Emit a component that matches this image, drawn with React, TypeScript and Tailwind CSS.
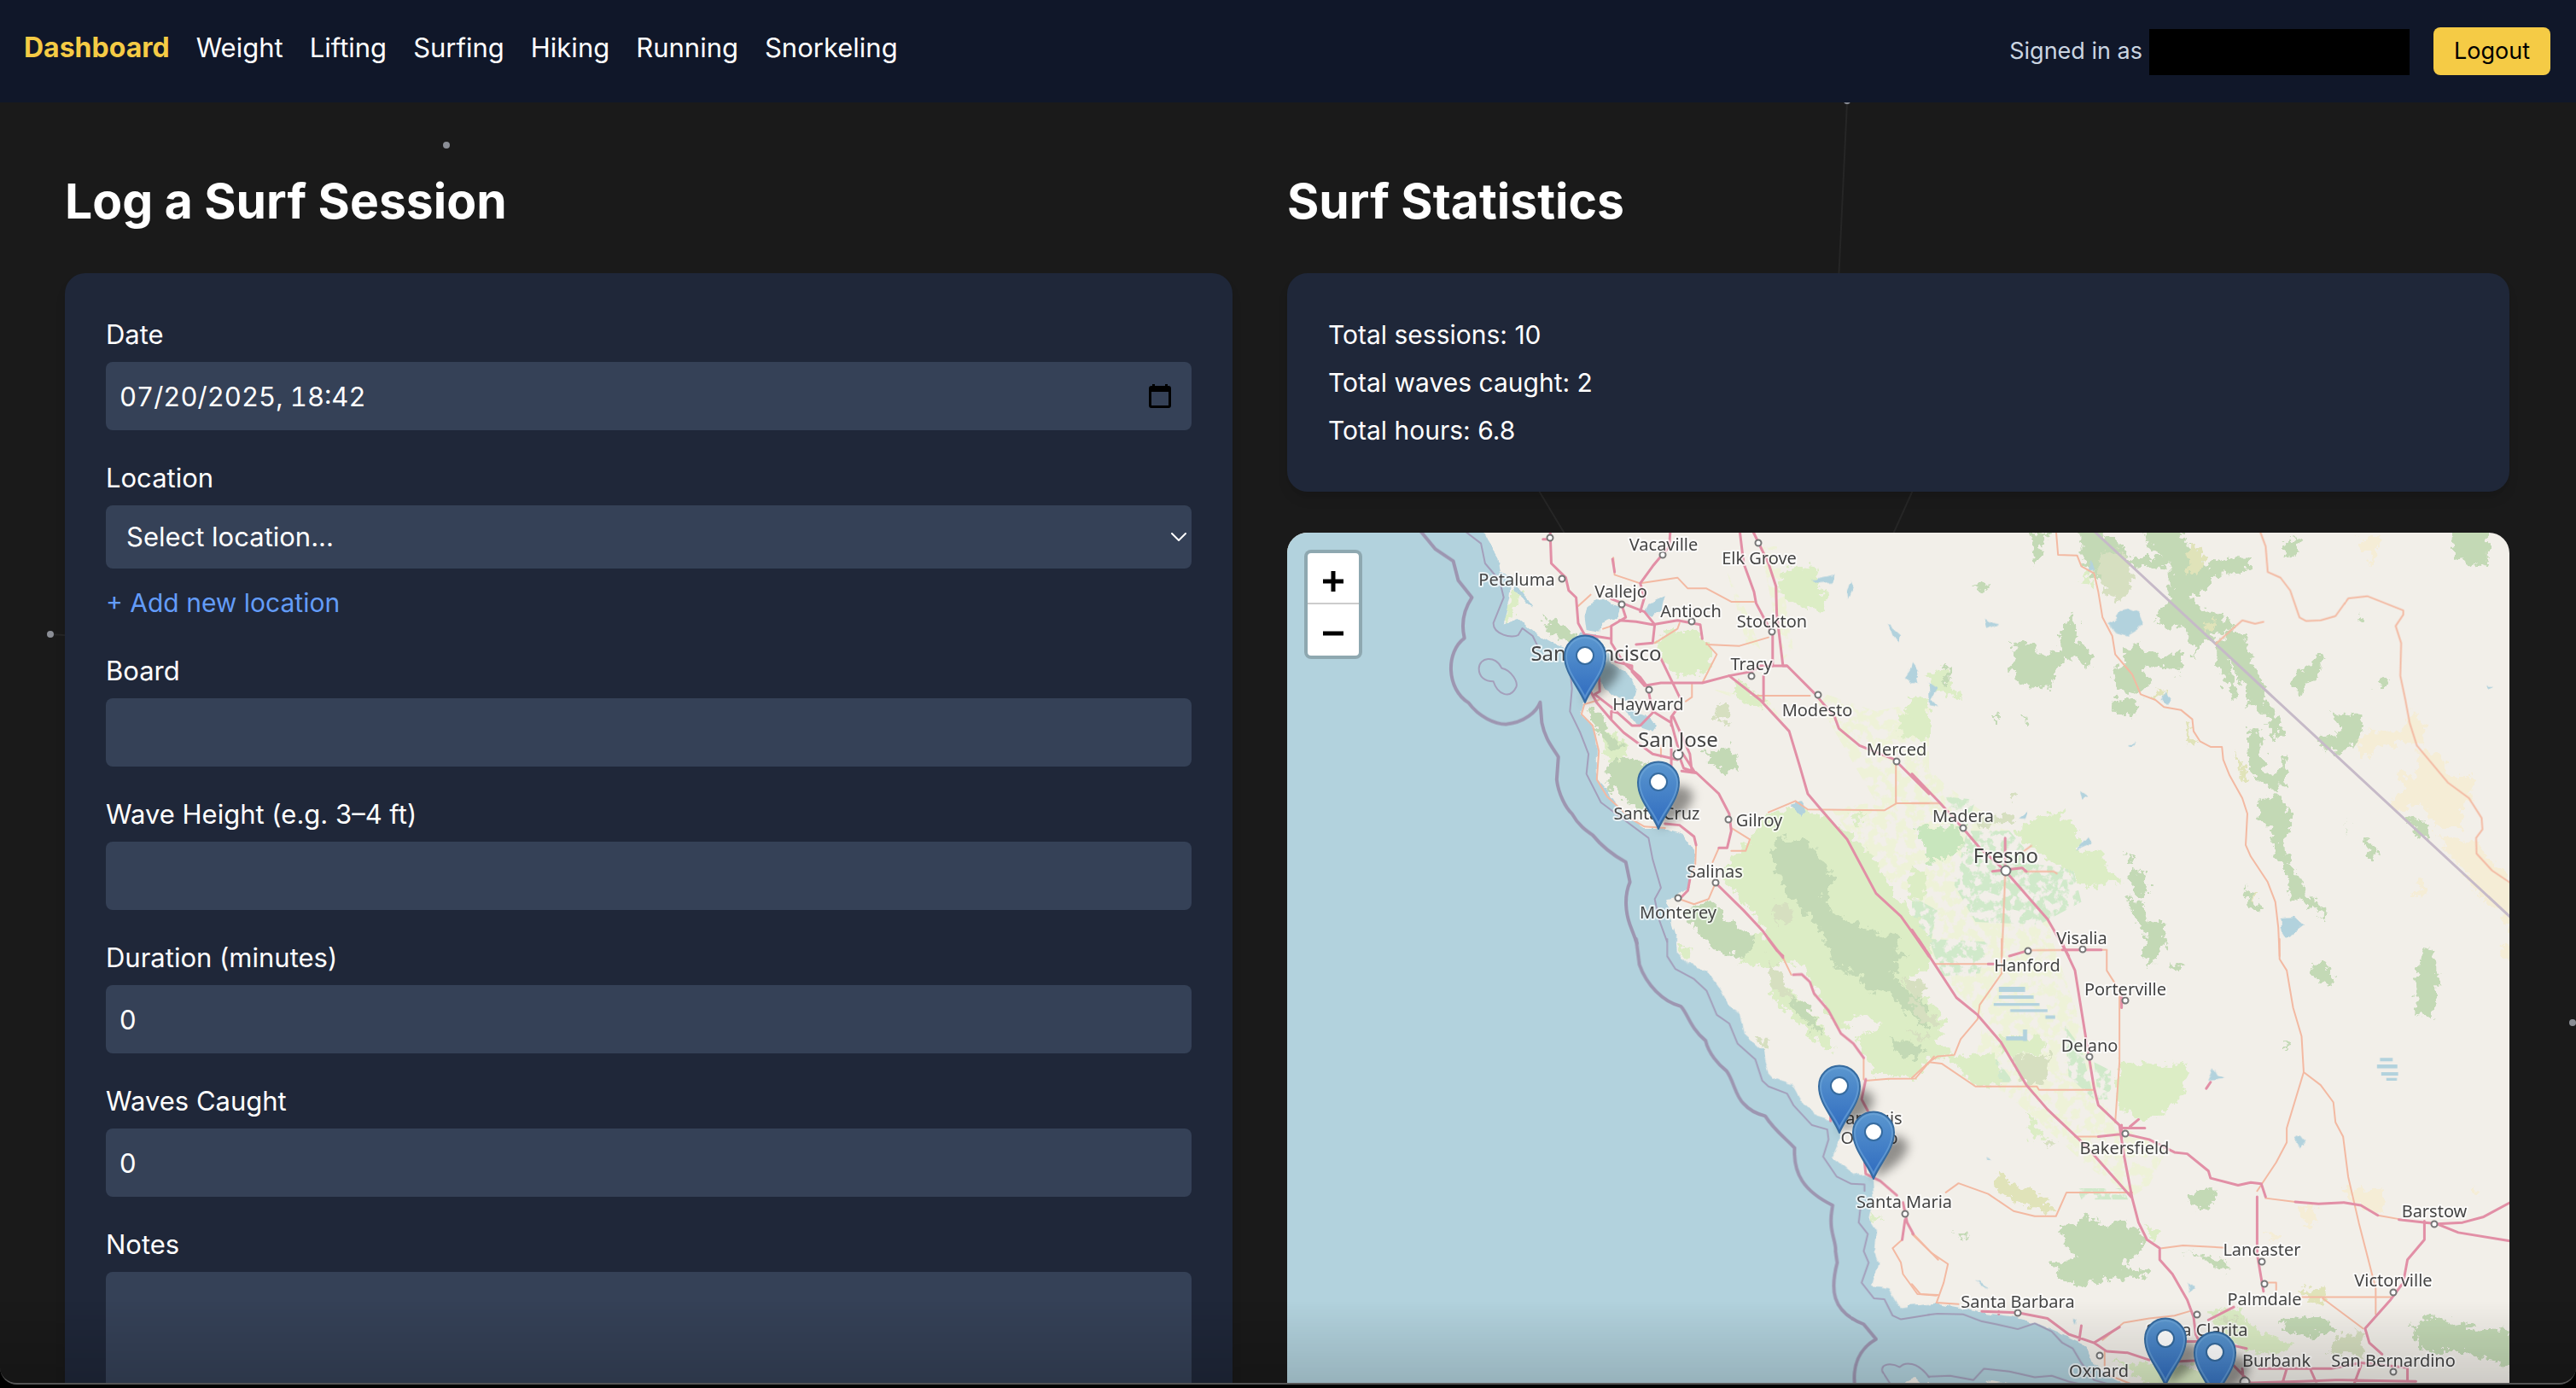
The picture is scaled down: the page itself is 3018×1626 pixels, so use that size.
import React, { useState } from "react";

const NAV = ["Weight", "Lifting", "Surfing", "Hiking", "Running", "Snorkeling"];

/* ---------- Map data ---------- */

type Sheet = "nw" | "ne" | "sw" | "se";
type Shape = [Sheet, string];

// Each sheet has its own drawing units; the matrix places it on the map.
const SHEETS: Record<Sheet, string> = {
  nw: "matrix(0.4847 0 0 0.3333 1500 620)",
  ne: "matrix(0.4962 0 0 0.3333 2240 620)",
  sw: "matrix(0.4847 0 0 0.3355 1500 1100)",
  se: "matrix(0.4962 0 0 0.3355 2240 1100)",
};

const WATER: Shape[] = [
  ["nw", "M-20,-20 480,-20 500,40 525,100 530,150 560,165 556,240 540,335 575,318 610,360 660,400 700,420 735,470 737,600 725,650 755,690 765,760 765,880 800,940 830,1000 880,1050 930,1050 970,1070 1000,1130 1003,1170 985,1260 960,1290 935,1300 945,1370 955,1420 960,1510 -20,1510Z"],
  ["nw", "M740,270 780,245 820,270 812,310 775,330 772,362 740,355 735,300Z"],
  ["nw", "M725,365 760,370 790,430 800,470 840,510 862,560 855,600 820,600 780,560 765,480 700,430Z"],
  ["nw", "M830,625 880,655 910,690 900,710 860,690 845,660Z"],
  ["nw", "M890,260 930,235 922,280 900,305 880,290Z"],
  ["nw", "M1285,175 1340,160 1335,185 1295,190Z M1470,330 1500,370 1495,400 1480,370Z M1510,520 1530,480 1540,540 1525,545Z M1370,210 1380,180 1385,200 1372,245Z"],
  ["nw", "M560,180 575,200 610,275 600,268 570,220Z M1235,965 1260,955 1270,990 1255,1010Z"],
  ["ne", "M460,330 478,318 490,290 512,281 535,295 543,325 532,352 508,374 480,362 470,345Z"],
  ["ne", "M870,1365 905,1362 925,1390 905,1412 885,1440 870,1405Z M600,570 612,600 600,615 592,600Z"],
  ["ne", "M0,470 15,500 5,545 -6,510Z M40,540 60,560 45,600 60,625 42,618Z M172,315 200,335 178,350Z M415,150 425,110 432,140Z M395,920 412,938 400,950Z M512,760 530,745 520,765Z M250,1020 275,990 268,1020Z M385,1130 415,1080 425,1105Z M1358,550 1372,552 1364,560Z"],
  ["sw", "M-20,-20 958,-20 955,40 985,85 1030,110 1060,170 1085,240 1110,260 1120,330 1165,390 1180,470 1190,485 1235,505 1260,570 1300,620 1345,640 1355,690 1335,760 1385,820 1400,815 1432,840 1435,900 1422,980 1440,1020 1435,1090 1445,1130 1430,1210 1470,1220 1498,1290 1568,1275 1568,1900 -20,1900Z"],
  ["se", "M-10,1282 60,1275 150,1300 240,1320 300,1345 340,1370 380,1400 410,1420 425,1475 470,1530 520,1568 520,1900 -10,1900Z"],
  ["se", "M700,495 712,448 722,475 742,485 720,492Z M905,700 920,685 930,705 915,730Z M650,1200 665,1220 655,1240Z M378,1320 388,1325 384,1345Z M150,1190 185,1220 160,1210Z M178,760 188,775 180,772Z"],
];

const WATER_CRISP: Shape[] = [
  ["se", "M205,167h62v18h-62z M205,197h82v12h-82z M193,224h108v9h-108z M232,245h88v10h-88z M315,267h23v12h-23z M222,340h50v14h-50z M262,316h10v40h-10z M1105,415h30v12h-30z M1098,438h48v14h-48z M1108,465h40v12h-40z M1120,485h25v10h-25z"],
];

const FARMLAND: Shape[] = [
  ["nw", "M1040,560 1180,600 1230,700 1180,640Z M1280,560 1440,640 1568,600 1568,1300 1480,1250 1380,1080 1330,980 1440,960Z M1080,150 1130,300 1160,420 1130,420Z M1160,60 1200,60 1240,420 1215,460Z"],
  ["ne", "M0,780 80,900 230,1060 200,1200 330,1380 330,1510 0,1510Z"],
  ["se", "M20,0 330,0 400,300 440,500 480,640 600,740 560,860 520,900 420,800 360,720 270,600 200,520 150,420 170,280 90,160Z"],
];

const MEADOW: Shape[] = [
  ["nw", "M1180,1000 1250,980 1320,1010 1420,1130 1490,1290 1568,1430 1568,1510 1210,1510 1150,1370 1100,1270 1060,1230 1100,1150 1140,1080Z"],
  ["nw", "M1210,160 1240,130 1300,140 1320,280 1260,280 1200,220Z M930,360 1010,360 1045,420 1035,500 960,520 930,460 905,400Z M555,210 580,230 555,335 540,335Z M780,690 840,760 820,830 780,800Z M1495,650 1568,660 1568,740 1500,735Z M1100,520 1180,610 1160,630 1100,590Z M1375,1000 1410,1000 1405,1030 1378,1030Z"],
  ["ne", "M250,1060 290,1010 350,1000 395,1060 395,1130 455,1130 460,1200 500,1240 400,1255 370,1200 320,1160 260,1090Z M-10,580 40,600 40,660 -10,665Z M25,520 70,490 115,600 80,590Z M395,190 405,150 430,160 425,205Z"],
  ["ne", "M0,1180 40,1230 20,1300 -10,1290Z M-10,1400 20,1440 50,1510 -10,1510Z"],
  ["sw", "M1010,-10 1568,-10 1568,110 1520,120 1530,190 1568,220 1568,420 1530,480 1440,480 1415,400 1390,350 1450,300 1400,260 1370,290 1350,320 1300,200 1270,110 1230,70 1190,100 1120,90 1100,40Z"],
  ["sw", "M1190,130 1230,180 1290,260 1340,390 1310,380 1250,290 1180,190Z M960,10 990,40 985,70 960,50Z M1420,960 1460,975 1430,990Z"],
  ["se", "M-10,180 40,210 80,290 60,350 100,400 40,420 10,490 -10,460Z M490,430 560,440 650,435 640,540 600,600 550,640 500,600 480,540Z M210,340 310,345 315,400 205,400Z M80,410 200,400 210,510 150,515Z M270,600 320,690 280,700Z M550,1000 590,1020 570,1060Z M470,1470 560,1480 700,1500 720,1590 560,1560Z M700,1300 770,1290 800,1350 900,1420 860,1460 760,1420Z"],
];

const MINT: Shape[] = [
  ["ne", "M130,1060 230,1060 300,1180 380,1190 400,1310 300,1390 150,1380 100,1250Z M0,1290 60,1340 40,1480 0,1420Z M80,940 150,950 140,1000 90,980Z"],
  ["se", "M40,0 180,10 160,120 70,130Z M360,300 400,380 430,560 370,480Z M430,430 470,460 470,560 440,560Z M150,410 200,420 240,500 170,500Z M390,870 500,870 510,910 400,910Z"],
];

const ORCHARD: Shape[] = [["ne", "M10,1045 120,1050 120,1130 40,1175 25,1100Z"]];

const FOREST: Shape[] = [
  ["nw", "M795,820 850,800 900,830 900,1000 870,1000 820,940 790,900Z M640,310 690,340 720,380 700,400 650,370Z M1200,1080 1280,1100 1340,1230 1310,1290 1340,1350 1450,1420 1520,1510 1380,1510 1300,1400 1230,1290 1180,1150Z M975,1340 1040,1310 1100,1390 1150,1440 1120,1510 1050,1480 1000,1400Z"],
  ["nw", "M740,620 770,640 800,730 830,760 800,770 765,700Z M1020,790 1090,760 1110,850 1070,850Z"],
  ["ne", "M400,-10 420,-10 500,60 510,110 560,95 590,95 560,60 545,-10 620,-10 655,60 690,90 690,130 740,105 800,100 800,140 720,165 690,215 655,240 690,280 750,320 755,350 700,380 680,400 670,465 665,400 640,340 600,350 575,310 610,250 610,130 560,140 520,120 450,190 400,110Z"],
  ["ne", "M720,400 760,345 785,370 795,440 830,550 830,600 870,660 875,720 845,735 845,660 800,620 785,545 760,490 745,450 770,590 760,600 720,470Z"],
  ["ne", "M800,700 825,700 830,850 850,870 870,840 880,785 885,800 875,900 855,920 820,880 790,830 795,740Z"],
  ["ne", "M815,960 865,930 895,990 895,1050 875,1100 905,1200 940,1290 980,1345 975,1365 930,1310 895,1300 885,1220 860,1140 845,1050 825,1020Z"],
  ["ne", "M235,400 290,395 300,440 350,430 350,370 375,290 390,330 385,390 420,420 420,490 380,450 350,470 325,560 260,555 250,520 220,500 245,460Z"],
  ["ne", "M500,420 525,400 570,440 600,440 640,425 635,510 600,490 560,480 545,510 565,540 540,580 490,570 470,500 500,470Z M480,590 540,600 520,660 475,650Z"],
  ["ne", "M985,650 1060,650 1065,690 1055,740 1020,775 990,790 960,750 960,725 1010,730 1010,690Z M880,100 875,60 900,25 918,60 905,95Z M1280,-10 1362,-10 1362,120 1325,130 1285,100 1275,60Z M900,520 930,490 955,470 955,440 977,465 950,510 920,580 900,555Z M1095,550 1115,520 1125,540 1105,563Z M1170,1020 1190,1005 1215,1040 1228,1095 1195,1080Z"],
  ["ne", "M515,1190 550,1200 560,1270 545,1290 520,1270Z M510,1300 545,1310 560,1380 595,1372 595,1440 585,1510 545,1500 560,1430 530,1380Z M785,1260 800,1275 825,1340 800,1345Z M280,10 330,10 310,60 290,130Z M140,205 185,190 170,220Z M75,475 88,475 88,540 78,540Z M190,655 208,665 200,690Z M260,650 280,665 270,680Z M1050,310 1060,300 1068,320 1058,330Z M1070,1080 1080,1090 1098,1140 1088,1170 1075,1140Z M1022,1080 1030,1010 1026,1060Z M500,1140 530,1150 515,1165Z"],
  ["sw", "M1310,-10 1500,-10 1480,60 1490,140 1530,200 1568,230 1568,330 1500,230 1460,170 1420,190 1400,120 1350,110Z M1470,340 1550,380 1540,420 1490,400Z M1225,190 1280,240 1310,330 1280,310 1240,240Z M1030,0 1110,0 1120,40 1060,20Z"],
  ["se", "M345,1010 420,965 450,1000 500,990 550,1040 545,1090 490,1140 570,1160 540,1180 460,1190 400,1210 350,1190 340,1150 320,1130 390,1120Z M870,1330 960,1310 1000,1370 940,1390 880,1370Z M1180,1350 1220,1320 1340,1360 1420,1370 1420,1500 1300,1440 1200,1440Z M650,890 710,870 720,910 680,945 655,920Z M940,90 970,85 1000,130 990,165 950,140Z M1190,120 1215,30 1240,80 1240,200 1225,280 1190,260Z M550,-10 600,-10 590,50 560,100 550,50Z M615,90 645,90 630,115Z M872,355 888,370 880,400Z M100,1030 130,1030 120,1055Z M640,1090 740,1120 745,1160 690,1120Z"],
];

const SCRUB: Shape[] = [
  ["nw", "M1050,640 1070,615 1090,640 1080,680 1055,670Z M1190,1310 1230,1320 1240,1370 1200,1390Z"],
  ["ne", "M445,80 500,80 522,160 500,240 480,250 440,190Z M150,1020 230,1000 240,1030 160,1050Z M230,930 245,940 240,970Z"],
  ["sw", "M1180,60 1215,150 1235,210 1190,170Z M1500,140 1560,160 1540,220Z M1510,300 1568,350 1540,350Z M1150,345 1185,350 1175,390Z"],
  ["se", "M235,400 325,410 310,505 270,505 240,450Z M-10,200 30,240 70,300 20,290Z M1000,1390 1070,1370 1060,1460 980,1450Z M720,1320 780,1330 760,1370Z M310,700 340,710 325,735Z"],
];

const HEATH: Shape[] = [
  ["ne", "M650,110 670,55 695,95 685,140 655,170Z M690,340 710,328 720,345 695,358Z M565,580 590,555 600,575 575,590Z M645,680 655,680 665,765 650,750Z M765,765 780,830 790,875 780,880 770,820Z M800,1280 818,1280 808,1300Z"],
  ["se", "M200,810 240,860 300,890 345,955 270,935 220,890 195,870Z M920,1220 975,1220 970,1290 940,1260Z"],
];

const SAND: Shape[] = [
  ["ne", "M1050,740 1085,705 1150,710 1190,640 1210,700 1210,750 1150,750 1100,770 1060,800Z M1145,860 1190,870 1190,775 1240,780 1270,870 1325,870 1325,940 1300,960 1300,1050 1240,1050 1200,960 1150,1000 1130,960 1160,920Z M1240,1080 1325,1095 1420,1240 1420,1440 1380,1330 1340,1290 1290,1180Z M1055,30 1105,30 1090,125Z M1185,1220 1215,1240 1210,1290 1180,1280 1200,1260Z"],
  ["se", "M1010,870 1110,870 1120,960 1080,960 1050,920Z M920,935 955,940 950,1000 925,1005Z M835,1020 865,1030 850,1060Z M1325,865 1345,880 1330,900Z M1390,20 1420,20 1420,80 1395,60Z"],
];

const ISLANDS: Shape[] = [
  ["sw", "M1505,1555 1535,1535 1550,1555 1568,1550 1568,1600 1500,1600Z"],
  ["se", "M175,1550 190,1538 230,1548 290,1568 290,1600 165,1600Z"],
];

const TRUNK: Shape[] = [
  ["nw", "M770,600 735,615 728,650 755,690 770,780 765,880 790,940 850,1020 880,1045 930,1050 M805,100 808,160 870,190 960,170 985,208 1030,208 1090,255 1145,255 M1180,995 1245,955 1275,985 1460,988 1490,963 1568,963 M1488,815V963 M1030,405 1110,410 1180,380 M1020,540 1055,440 1030,400 M1150,585H1280 M1090,1050 1135,1090 1125,1130 1090,1130 M1005,1110 1003,1180 990,1230 M965,1300 1000,1318 1035,1300 1050,1250 M995,545V590L980,605 M720,270 750,230 M920,760V800 M945,770V830 M905,400 960,350 965,330 M1060,1120 1045,1170 M780,350 800,340"],
  ["ne", "M340,0 345,90 390,92 400,130 430,155 440,220 450,310 473,375 480,440 520,510 540,580 575,600 595,625 635,635 662,668 665,710 680,745 705,765 732,765 735,810 750,865 780,945 792,1000 788,1110 800,1150 840,1240 858,1310 865,1400 868,1500"],
  ["ne", "M820,0 835,60 840,150 870,170 893,215 915,310 930,322 965,320 1000,305 1030,243 1075,235 1160,285 1160,300 1142,340 1155,400 1153,515 1165,600 1175,680 1192,760 1265,890 1315,945 1345,1015 1347,1055 1332,1085 1333,1140 1370,1200 1415,1245 M718,402 780,320 810,332 830,325 M0,963H65 M220,1215 215,1400 212,1500 M265,1203H335L342,1210 M275,1480 460,1478 M265,1130 282,1112"],
  ["sw", "M1215,65 1235,125 M1410,415V490 M1530,1030 1590,1120 M1503,1050 1480,1080 1500,1130 1505,1170 1540,1240 1590,1243 M1415,495 1470,488 1535,487 1580,410"],
  ["se", "M868,0V70L885,110 900,240 920,340 925,465 885,660 885,710 860,780 815,880 M925,465 965,510 995,570 1000,640 1018,690 1030,830 1055,990 1095,1220V1310 M55,87H190 M460,40V110L490,180V430L480,640 M212,0V120L160,230 155,280 115,350 100,405 60,410 40,430 0,485 M40,430 70,435 150,515 295,515 300,527 430,527 M385,690H440 M80,885 110,853 180,890 240,950 290,968 340,968 365,885 520,885 M590,1080 640,1070 740,1078 M920,1250H1130 M970,1255 1065,1360 M0,1030 45,1095 85,1135 75,1200 58,1270 110,1275 M0,1205 20,1240 58,1245 M450,1400 500,1340 560,1325 620,1315 655,1300 M835,905 905,918 M1100,965 1150,978 M455,1440V1490 M835,1200H860V1225 M460,1520 520,1555 600,1555"],
];

const MOTORWAY: Shape[] = [
  ["nw", "M1110,0 1120,120 1145,220 1150,260 1190,370 1190,480 M1140,0 1180,120 1198,200 1200,300 1215,480 1225,480 1290,575 1340,660 1350,700 1400,760 1485,810 1568,930 M1085,515 1160,600 1230,710 1255,830 1275,930 1310,990 1370,1090 1440,1280 1500,1360 1568,1500 M652,0 655,120 690,170 697,215 715,240 720,330 735,370 M635,35H652 M1168,515V605"],
  ["nw", "M943,0 940,60 900,130 870,190 880,240 870,290 M803,105 808,150 M825,265 835,310 800,340 800,400 830,470 870,520 890,560 M735,370 800,385 M905,335 900,400 860,405 M820,320 860,325 900,335 960,320 1015,335 1020,385 M800,245 880,290 905,335 M880,550 920,540 1020,540 1085,515 1140,500 1160,480H1225 M760,580 800,625 850,690 870,690 900,645 M750,570 765,610 800,670 830,715 900,790 960,810 M800,670 800,640 815,645 M920,455 965,590 M900,640 945,680 960,760 1000,850 M890,570 900,640 M945,690V660L960,630 M960,780 975,840 1005,855 1060,930 1085,1000 1090,1060 1080,1120 1060,1120 M1050,1240 1120,1340 1165,1410 1200,1480 1215,1500 M930,1035 965,1040 1000,1080 1005,1110 M990,1230 985,1270 965,1300 M810,465 850,480 850,500 880,550 M770,490 772,570 760,580 M945,760 945,840 M950,660 990,790 995,855 M970,850 1005,857"],
  ["ne", "M0,860 65,960 120,1050 160,1120 220,1200 320,1370 355,1460 370,1500 M220,1085V1215 M190,1202 260,1190 270,1203 M0,1408 42,1500 M230,1500 275,1480 M355,1478H447"],
  ["sw", "M1180,0 1215,65 M1240,125 1260,123 1280,150 1290,190 1325,250 1355,330 1385,365 1410,415 M1415,490 1405,560 1420,600 M1412,780 1415,820 1450,845 1490,895 M1505,920 1515,990 1530,1030 M1510,980 1503,1050 M1540,0 1568,60 M1330,620V635"],
  ["se", "M15,0 50,80 105,205 155,265 210,360 270,510 320,595 395,700 430,755 520,905 535,990 555,1050 585,1080 585,1120 615,1170 650,1260 665,1320 670,1380 M350,0 385,110 410,340 430,520 440,580 490,650 500,750 520,905 M440,690 500,680 560,700 620,745 650,750 700,810 705,835 770,860 800,850 825,855 835,900 M905,918 960,925 1020,920 1060,930 1100,965 M1150,980 1240,995 1300,990 1350,970 1415,918 M1240,995 1290,1025 1415,1055 M1210,985V1050L1170,1120 1160,1200 1130,1260 1070,1360 1080,1410 1110,1450 M815,900V1100L830,1230 M760,1285 700,1330 M495,650V700 M495,660H550 M515,655 535,630 M695,522 705,500 M495,200V240 M180,87H192"],
  ["se", "M165,1300 250,1305 320,1325 370,1380 430,1410 460,1440 510,1445 560,1470 M400,1350 395,1400 M430,1410 490,1355 M630,1475 700,1470 760,1490 800,1550 M640,1405 720,1405 M800,1550 920,1545 1000,1540 1190,1545 M820,1500 990,1500 1060,1480 1170,1497V1545 M885,1500 875,1550 M940,1500 955,1550 M1060,1490 1045,1550 M780,1500 785,1568 M670,1380 690,1440 760,1490 M205,1300V1310 M760,1420 790,1430"],
];

const SEA_BORDER: Shape[] = [
  ["nw", "M335,0 375,70 418,112 430,180 463,240 C440,290 438,340 445,383 C400,430 400,560 455,610 C480,660 520,685 545,685 C590,680 620,640 628,608 L632,680 C640,740 660,770 672,800 L668,880 C672,930 690,980 705,1000 C720,1040 740,1060 755,1075 C780,1120 810,1150 835,1170 L845,1240 C830,1290 835,1350 845,1390 L862,1455"],
  ["sw", "M860,0 868,90 C885,160 925,220 968,235 C985,260 990,310 1028,355 C1035,400 1060,440 1078,460 C1095,490 1100,550 1120,575 C1135,600 1155,612 1172,618 C1195,670 1225,700 1243,730 C1240,820 1265,880 1335,930 L1333,950 C1325,1020 1345,1060 1342,1090 L1346,1130 C1330,1220 1330,1300 1410,1345 L1440,1397 C1400,1430 1380,1490 1390,1575"],
];

const SEA_LINE: Shape[] = [
  ["nw", "M440,0 485,50 495,120 530,180 540,240 515,330 C515,370 560,385 575,372 L585,348 610,375 625,420 M700,490 705,560 700,640 725,715 745,790 740,860 775,960 830,1020 890,1085 900,1160 920,1260 905,1300 915,1370 935,1450 M480,490 C480,450 520,440 535,488 C560,495 575,540 570,555 C555,600 525,580 515,535 C495,535 480,520 480,490"],
  ["sw", "M935,0V60L955,105 1000,140 1030,180 1055,265 1085,295 1105,365 1148,420 1165,495 1180,515 1225,540 1240,580 1285,650 1322,665 1325,700 1312,760 1345,830 1380,855 1412,857V880 M1402,940 1398,990 1420,1030 1410,1090 1422,1130 1405,1200 1435,1255 1460,1258 1480,1315 1500,1328 1568,1312 M1475,1555 1455,1510 C1450,1480 1480,1480 1497,1495 C1510,1475 1540,1475 1568,1530"],
  ["se", "M40,1312 60,1308 120,1310 165,1335 200,1345 250,1362 290,1342 330,1370 355,1410 380,1430 400,1480 430,1540 480,1560 M40,1528 90,1525 145,1540 170,1500 230,1510 290,1530 330,1525 370,1545 440,1568"],
];

// name, label centre x, label middle y, larger label
const LABELS: [string, number, number, boolean?][] = [
  ["Vacaville", 1949, 637], ["Elk Grove", 2061, 653], ["Petaluma", 1777, 678], ["Vallejo", 1899, 692],
  ["Antioch", 1981, 715], ["Stockton", 2076, 727], ["San Francisco", 1870, 764, true], ["Tracy", 2052, 777],
  ["Hayward", 1931, 824], ["Modesto", 2129, 831], ["San Jose", 1966, 865, true], ["Merced", 2222, 877],
  ["Santa Cruz", 1941, 952], ["Gilroy", 2061, 960], ["Salinas", 2009, 1020], ["Monterey", 1966, 1068],
  ["Madera", 2300, 955], ["Fresno", 2350, 1001, true], ["Visalia", 2439, 1098], ["Hanford", 2375, 1130],
  ["Porterville", 2490, 1158], ["Delano", 2448, 1224], ["Bakersfield", 2489, 1344], ["San Luis", 2190, 1309],
  ["Obispo", 2190, 1332], ["Santa Maria", 2231, 1407], ["Barstow", 2852, 1418], ["Lancaster", 2650, 1463],
  ["Palmdale", 2653, 1521], ["Victorville", 2804, 1499], ["Santa Barbara", 2364, 1524],
  ["Santa Clarita", 2574, 1557], ["Oxnard", 2459, 1605], ["Burbank", 2667, 1593], ["San Bernardino", 2804, 1593],
];

const TOWNS: [number, number][] = [
  [1816, 630], [1948, 650], [2060, 636], [1830, 678], [1900, 708], [1982, 728], [2076, 740], [2052, 792],
  [1932, 808], [2130, 814], [2222, 892], [2025, 960], [2010, 1034], [1966, 1052], [2300, 970], [2440, 1112],
  [2376, 1114], [2490, 1172], [2448, 1238], [2490, 1328], [2232, 1422], [2852, 1434], [2650, 1478],
  [2653, 1504], [2804, 1514], [2364, 1538], [2574, 1540], [2460, 1588], [2804, 1607],
];

const CITIES: [number, number][] = [[1966, 884], [2350, 1020], [2630, 1619]];

const PINS: [number, number][] = [
  [1857, 823], [1943, 971], [2155, 1327], [2195, 1381], [2537, 1623], [2595, 1639],
];

/* ---------- Map drawing ---------- */

function Fill({ shapes, color }: { shapes: Shape[]; color: string }) {
  return (
    <g fill={color}>
      {shapes.map(([sheet, d], i) => (
        <path key={i} d={d} transform={SHEETS[sheet]} />
      ))}
    </g>
  );
}

function Line({ shapes, color, width }: { shapes: Shape[]; color: string; width: number }) {
  return (
    <g fill="none" stroke={color} strokeWidth={width} strokeLinejoin="round" strokeLinecap="round">
      {shapes.map(([sheet, d], i) => (
        <path key={i} d={d} transform={SHEETS[sheet]} vectorEffect="non-scaling-stroke" />
      ))}
    </g>
  );
}

function Pin({ x, y }: { x: number; y: number }) {
  return (
    <g transform={`translate(${x} ${y})`}>
      <path
        d="M0,0C-7,-18 -24,-34 -24,-54.500A24,24 0 0 1 24,-54.500C24,-34 7,-18 0,0Z"
        fill="url(#pin)"
        stroke="#366b9f"
        strokeWidth="2"
        strokeLinejoin="round"
      />
      <path
        d="M0,-6C-7,-22 -22,-36 -22,-54A22,22 0 0 1 22,-54C22,-36 7,-22 0,-6Z"
        fill="none"
        stroke="#6fa6d8"
        strokeOpacity="0.6"
        strokeWidth="2"
      />
      <circle cy="-55" r="10" fill="#fff" stroke="#366b9f" strokeWidth="2" />
    </g>
  );
}

function CoastMap() {
  return (
    <svg
      viewBox="1508 624 1432 1100"
      preserveAspectRatio="xMinYMin slice"
      role="img"
      aria-label="Map of surf locations"
      className="block w-full"
    >
      <defs>
        <linearGradient id="pin" x1="0" y1="0" x2="0" y2="1">
          <stop offset="0" stopColor="#5b97cf" />
          <stop offset="1" stopColor="#2e6abf" />
        </linearGradient>
        <filter id="rough" x="0" y="0" width="1" height="1">
          <feTurbulence type="fractalNoise" baseFrequency="0.11" numOctaves="4" seed="4" result="n" />
          <feDisplacementMap in="SourceGraphic" in2="n" scale="20" xChannelSelector="R" yChannelSelector="G" />
        </filter>
        <filter id="coast" x="0" y="0" width="1" height="1">
          <feTurbulence type="fractalNoise" baseFrequency="0.08" numOctaves="2" seed="9" result="n" />
          <feDisplacementMap in="SourceGraphic" in2="n" scale="7" xChannelSelector="R" yChannelSelector="G" />
        </filter>
        <filter id="mottle" x="0" y="0" width="1" height="1">
          <feTurbulence type="fractalNoise" baseFrequency="0.09" numOctaves="4" seed="12" />
          <feColorMatrix values="0 0 0 0 0  0 0 0 0 0  0 0 0 0 0  8 0 0 0 -3.4" result="n" />
          <feComposite in="SourceGraphic" in2="n" operator="in" />
        </filter>
        <filter id="soft" x="-1" y="-1" width="3" height="3">
          <feGaussianBlur stdDeviation="6" />
        </filter>
      </defs>

      <rect x="1508" y="624" width="1432" height="1100" fill="#f2efe9" />
      <g filter="url(#mottle)">
        <rect x="1500" y="616" width="1448" height="1016" fill="none" />
        <Fill shapes={FARMLAND} color="#eef2d8" />
        <Fill shapes={MINT} color="#d0e9ca" />
      </g>
      <g filter="url(#rough)">
        <rect x="1480" y="600" width="1480" height="1040" fill="none" />
        <Fill shapes={SAND} color="#f5edd6" />
        <Fill shapes={MEADOW} color="#dcedc5" />
        <Fill shapes={ORCHARD} color="#c8e6bd" />
        <Fill shapes={FOREST} color="#c3d9b5" />
        <Fill shapes={SCRUB} color="#d6dfc0" />
        <Fill shapes={HEATH} color="#e0e3b9" />
      </g>
      <g filter="url(#coast)">
        <Fill shapes={WATER} color="#b2d2dd" />
        <Fill shapes={ISLANDS} color="#f2efe9" />
      </g>
      <Fill shapes={WATER_CRISP} color="#b2d2dd" />
      <Line shapes={[["ne", "M425,0 1415,1366"]]} color="#c6bac8" width={3} />
      <Line shapes={SEA_BORDER} color="#9d96b1" width={4} />
      <Line shapes={SEA_LINE} color="#a49fbb" width={2} />
      <Line shapes={TRUNK} color="#f3b9a2" width={2} />
      <Line shapes={MOTORWAY} color="#e28fa6" width={3} />

      <g fill="#fff" stroke="#777" strokeWidth="2">
        {TOWNS.map(([x, y]) => (
          <circle key={`${x}-${y}`} cx={x} cy={y} r="3.500" />
        ))}
        {CITIES.map(([x, y]) => (
          <circle key={`${x}-${y}`} cx={x} cy={y} r="5.500" />
        ))}
      </g>

      <g
        textAnchor="middle"
        dominantBaseline="central"
        fill="#444"
        stroke="#fff"
        strokeOpacity="0.7"
        strokeWidth="4"
        strokeLinejoin="round"
        paintOrder="stroke"
        className="font-['Noto_Sans',sans-serif]"
      >
        {LABELS.map(([name, x, y, big]) => (
          <text key={name} x={x} y={y} className={big ? "text-[24px]" : "text-[20px]"}>
            {name}
          </text>
        ))}
      </g>

      <g filter="url(#soft)" fill="#000" fillOpacity="0.4">
        {PINS.map(([x, y]) => (
          <path key={x} d={`M${x},${y}L${x + 10},${y - 44}Q${x + 28},${y - 58} ${x + 40},${y - 42}Q${x + 44},${y - 24} ${x},${y}Z`} />
        ))}
      </g>
      {PINS.map(([x, y]) => (
        <Pin key={x} x={x} y={y} />
      ))}
    </svg>
  );
}

/* ---------- Form ---------- */

const FIELD = "block w-full h-20 rounded-lg bg-[#354157] px-4 text-white outline-none";

function Field({ id, label, children }: { id: string; label: string; children: React.ReactNode }) {
  return (
    <div>
      <label htmlFor={id} className="mb-2 block">
        {label}
      </label>
      {children}
    </div>
  );
}

function SurfForm() {
  const [form, setForm] = useState({
    date: "07/20/2025, 18:42",
    location: "",
    board: "",
    height: "",
    duration: "0",
    waves: "0",
    notes: "",
  });
  const bind = (key: keyof typeof form) => ({
    id: key,
    value: form[key],
    onChange: (e: React.ChangeEvent<HTMLInputElement | HTMLSelectElement | HTMLTextAreaElement>) =>
      setForm({ ...form, [key]: e.target.value }),
  });

  return (
    <form className="flex flex-col gap-8 rounded-3xl bg-[#1f2739] p-12 shadow-lg">
      <Field id="date" label="Date">
        <div className="relative">
          <input type="text" className={FIELD + " tabular-nums"} {...bind("date")} />
          <button type="button" aria-label="Open calendar" className="absolute inset-y-0 right-6">
            <svg viewBox="0 0 26 28" className="h-7 w-[26px]" aria-hidden="true">
              <path d="M4,0h3v2h12V0h3v2h1q3,0 3,3v20q0,3 -3,3H3q-3,0 -3,-3V5q0,-3 3,-3h1zM3,9v16h20V9z" fill="#000" fillRule="evenodd" />
            </svg>
          </button>
        </div>
      </Field>
      <Field id="location" label="Location">
        <div className="relative">
          <select
            className="block h-[74px] w-full appearance-none rounded-lg bg-[#354157] px-6 text-white outline-none"
            {...bind("location")}
          >
            <option value="">Select location...</option>
          </select>
          <svg
            viewBox="0 0 18 10"
            aria-hidden="true"
            className="pointer-events-none absolute right-1.5 top-8 h-2.5 w-[18px]"
            fill="none"
            stroke="#fff"
            strokeWidth="2"
            strokeLinecap="round"
          >
            <path d="M1,1 9,9 17,1" />
          </svg>
        </div>
        <button type="button" className="mt-4 block text-[30px] text-[#639cf8]">
          + Add new location
        </button>
      </Field>
      <Field id="board" label="Board">
        <input type="text" className={FIELD} {...bind("board")} />
      </Field>
      <Field id="height" label="Wave Height (e.g. 3–4 ft)">
        <input type="text" className={FIELD} {...bind("height")} />
      </Field>
      <Field id="duration" label="Duration (minutes)">
        <input type="number" className={FIELD} {...bind("duration")} />
      </Field>
      <Field id="waves" label="Waves Caught">
        <input type="number" className={FIELD} {...bind("waves")} />
      </Field>
      <Field id="notes" label="Notes">
        <textarea
          className="block h-40 w-full resize-none rounded-lg bg-[#354157] p-4 text-white outline-none"
          {...bind("notes")}
        />
      </Field>
    </form>
  );
}

/* ---------- Page ---------- */

function Particles() {
  return (
    <svg className="pointer-events-none absolute inset-0 h-full w-full" aria-hidden="true">
      <g stroke="#262626" strokeWidth="2">
        <path d="M2164,120 2154,330M2243,570 2216,630M1800,570 1836,630M59,743 90,745" />
      </g>
      <g fill="#8b8e96">
        <circle cx="2164" cy="118" r="4" />
        <circle cx="523" cy="170" r="4" />
        <circle cx="59" cy="743" r="4" />
        <circle cx="3014" cy="1198" r="4" />
      </g>
    </svg>
  );
}

export default function App() {
  return (
    <div className="h-screen overflow-hidden bg-black pb-1 font-[Inter,'Liberation_Sans',sans-serif] text-[31px] leading-12 text-white">
      <div className="relative flex h-full flex-col overflow-hidden rounded-b-[20px] border-b-2 border-[#555] bg-[#1a1a1a]">
        <Particles />
        <header className="relative flex items-center justify-between bg-[#101729] py-8 pl-7 pr-[30px]">
          <nav className="flex gap-[31px] self-start">
            <a href="#dashboard" className="text-[32px] font-bold text-[#f5cb45]">
              Dashboard
            </a>
            {NAV.map((item) => (
              <a key={item} href={`#${item.toLowerCase()}`}>
                {item}
              </a>
            ))}
          </nav>
          <div className="flex items-center text-[27px]">
            <span className="text-[#cbd5e1]">Signed in as</span>
            <span className="ml-2 mt-0.5 h-[54px] w-[305px] bg-black" />
            <button type="button" className="ml-7 h-14 rounded-lg bg-[#f5cb45] px-6 text-black">
              Logout
            </button>
          </div>
        </header>

        <main className="relative grid min-h-0 flex-1 grid-cols-[1368fr_1432fr] items-start gap-16 overflow-hidden pl-19 pr-[78px] pt-20">
          <section>
            <h1 className="mb-12 text-[57px] font-bold leading-[72px]">Log a Surf Session</h1>
            <SurfForm />
          </section>

          <section>
            <h2 className="mb-12 text-[57px] font-bold leading-[72px]">Surf Statistics</h2>
            <div className="mb-12 flex flex-col gap-2 rounded-3xl bg-[#1f2739] p-12 text-[30px] shadow-lg">
              <p>Total sessions: 10</p>
              <p>Total waves caught: 2</p>
              <p>Total hours: 6.8</p>
            </div>
            <div className="relative overflow-hidden rounded-3xl">
              <CoastMap />
              <div className="absolute left-5 top-5 flex flex-col overflow-hidden rounded-lg border-4 border-black/20 bg-white bg-clip-padding">
                <button
                  type="button"
                  aria-label="Zoom in"
                  className="flex h-15 w-15 items-center justify-center border-b-2 border-[#ccc] pt-2"
                >
                  <svg viewBox="0 0 24 24" className="size-6" stroke="#000" strokeWidth="5" aria-hidden="true">
                    <path d="M0,12H24M12,0V24" />
                  </svg>
                </button>
                <button type="button" aria-label="Zoom out" className="flex h-15 w-15 items-center justify-center pt-2">
                  <svg viewBox="0 0 24 24" className="size-6" stroke="#000" strokeWidth="5" aria-hidden="true">
                    <path d="M0,12H24" />
                  </svg>
                </button>
              </div>
            </div>
          </section>
        </main>
        <div className="pointer-events-none absolute inset-x-0 bottom-0 h-24 bg-gradient-to-b from-transparent to-black/15" />
      </div>
    </div>
  );
}
